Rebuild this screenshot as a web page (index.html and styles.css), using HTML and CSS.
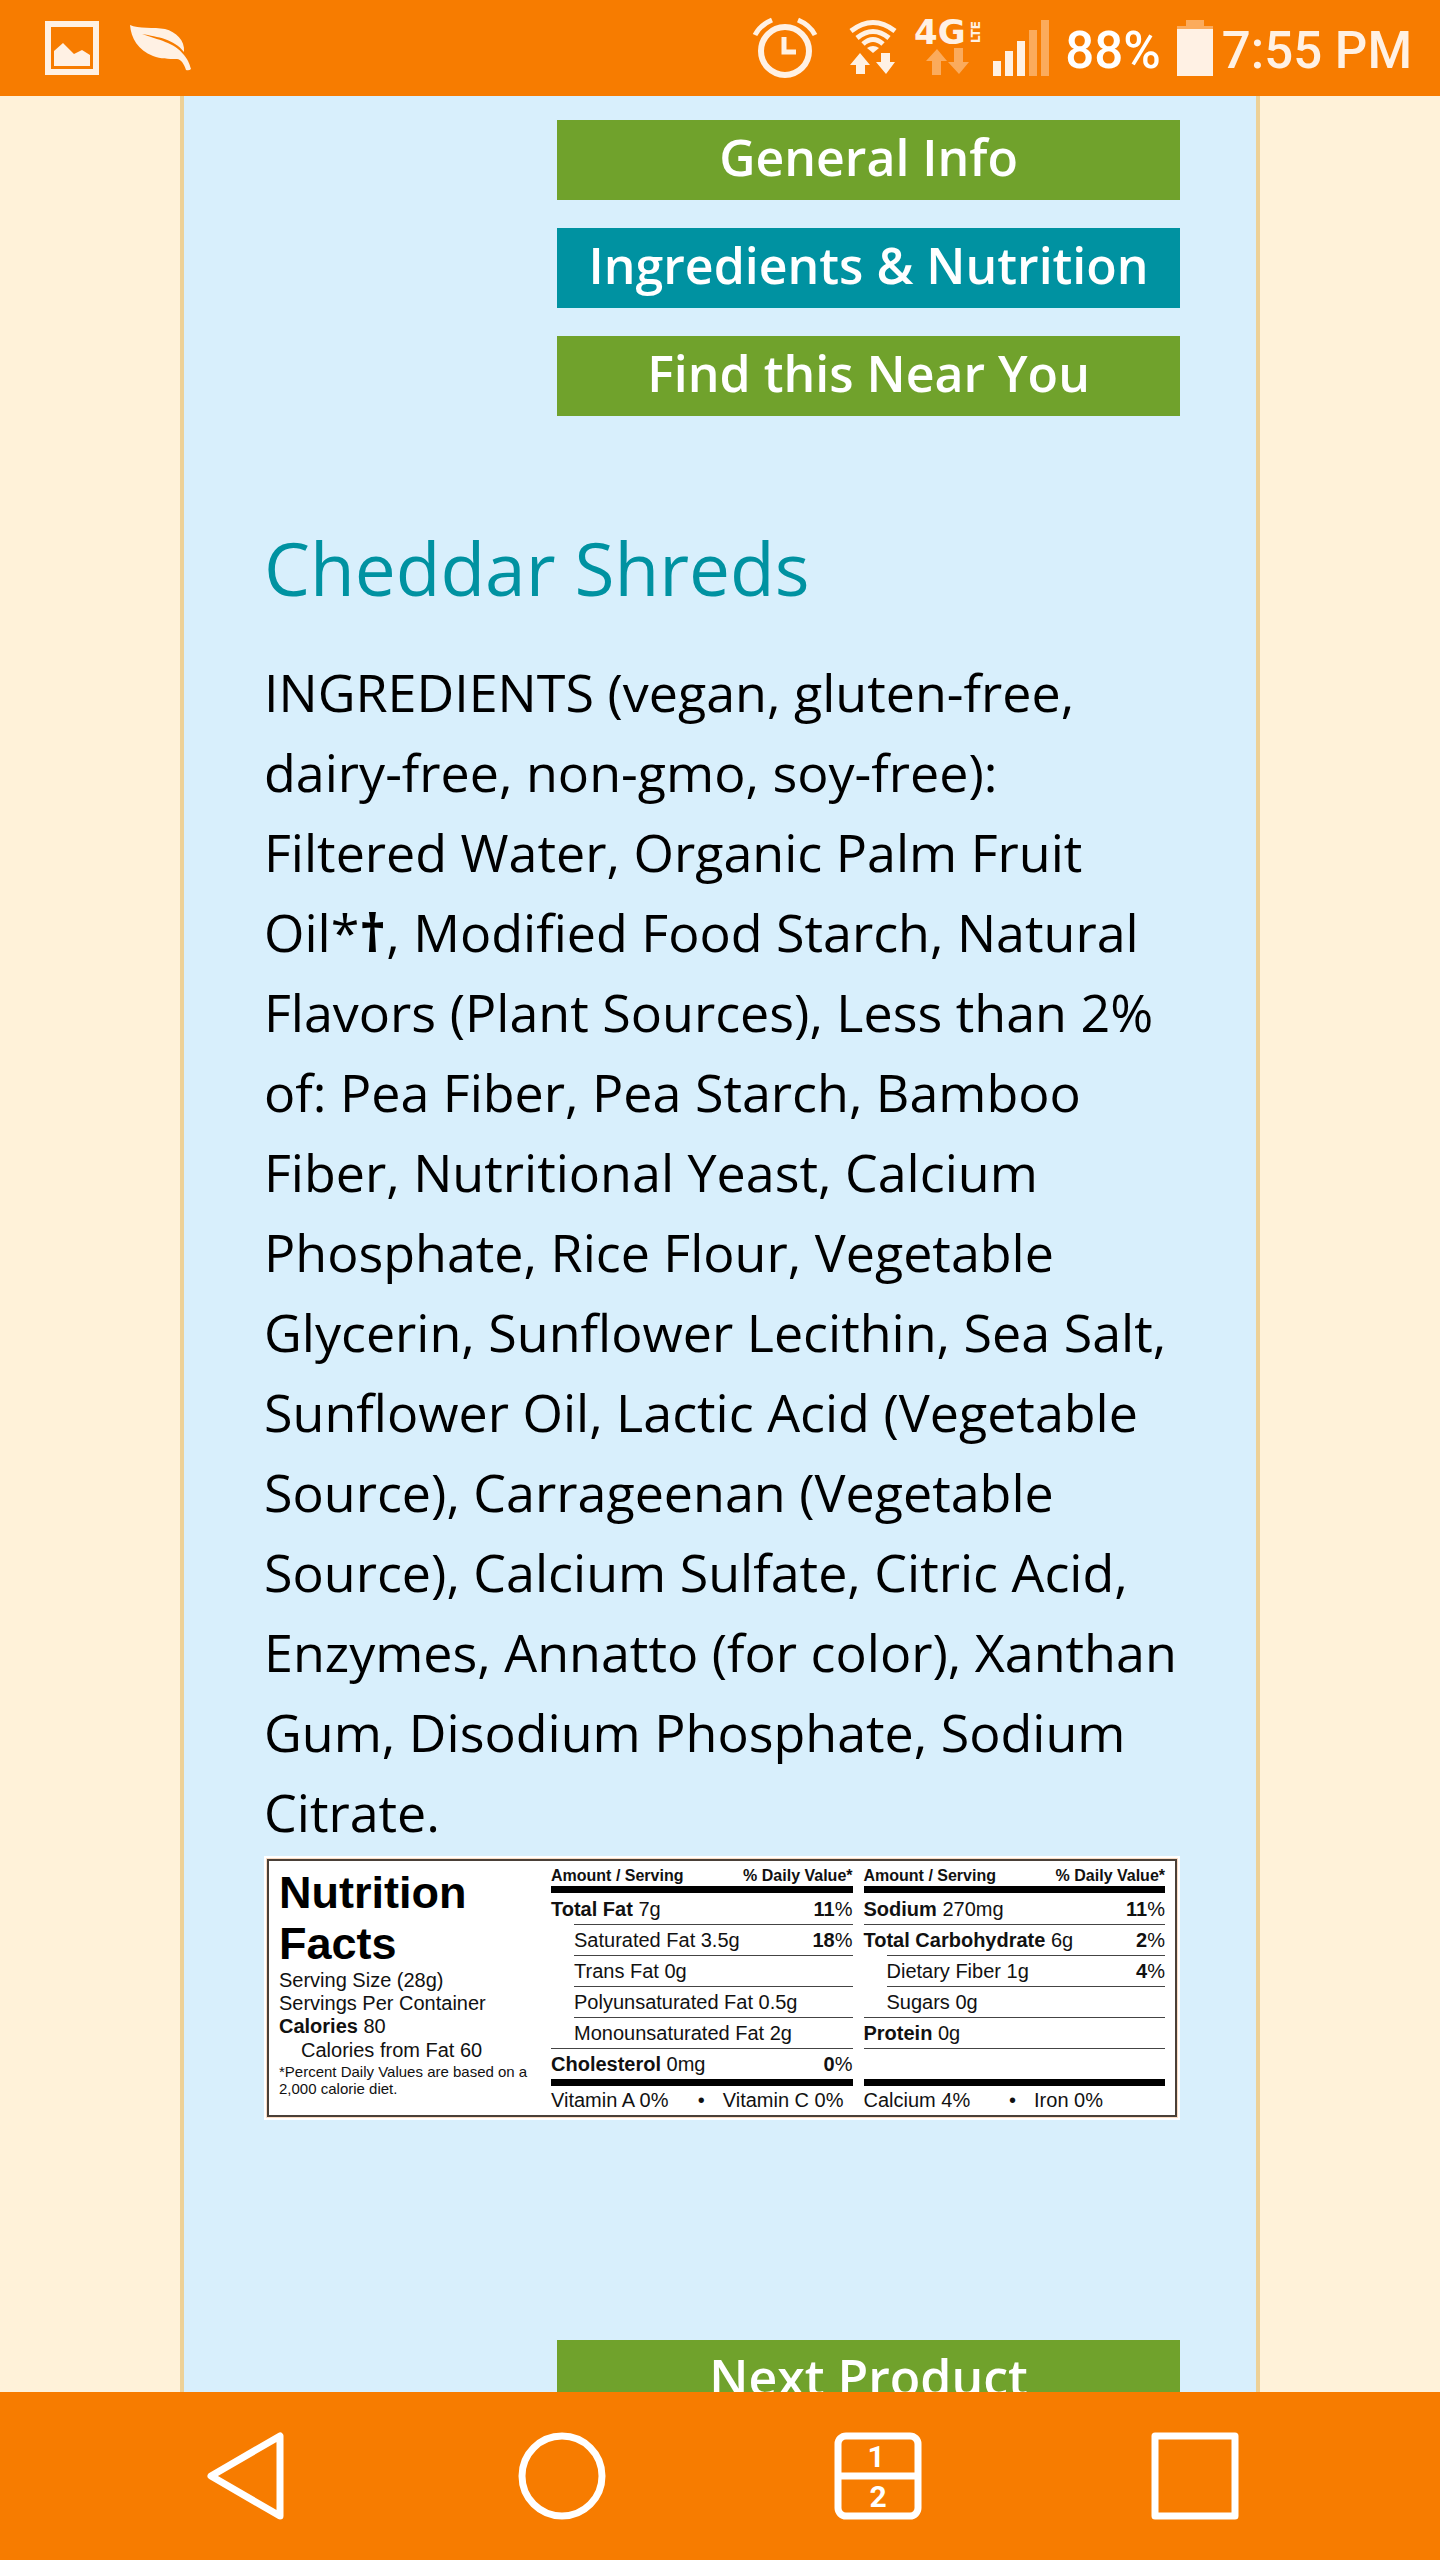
FILE: index.html
```
<!DOCTYPE html>
<html lang="en">
<head>
	<meta charset="UTF-8">
	<meta name="viewport" content="width=device-width, initial-scale=1">
	<title>Cheddar Shreds</title>
	<link rel="stylesheet" href="styles.css">
</head>
<body>
	<header class="status-bar">
		<div class="status-left">
			<svg width="54" height="54" viewBox="0 0 54 54">
				<path d="M3 3H51V51H3Z" fill="none" stroke="#fff1e4" stroke-width="6"/>
				<path d="M9 30L18 22L29 33L37 29L45 34V45H9Z" fill="#fff1e4"/>
			</svg>
			<svg width="62" height="46" viewBox="0 0 62 46">
				<path d="M0 0C8 4 24 2 35 4C46 7 55 15 54 27C44 14 28 12 12 9C28 15 44 17 54 30C59 36 60 41 61 44Q59 46 56 45C54 39 51 34 47 34C38 34 31 34 23 31C8 25 1 13 0 0Z" fill="#fff1e4"/>
			</svg>
		</div>
		<div class="status-right">
			<svg class="alarm" width="64" height="62" viewBox="0 0 64 62">
				<circle cx="32" cy="34" r="24" fill="none" stroke="#fff1e4" stroke-width="6"/>
				<path d="M31 20V35H43" fill="none" stroke="#fff1e4" stroke-width="5"/>
				<path d="M2 18Q7 8 19 3M62 18Q57 8 45 3" fill="none" stroke="#fff1e4" stroke-width="5"/>
			</svg>
			<svg class="wifi" width="48" height="56" viewBox="0 0 48 56">
				<g fill="none" stroke="#fff1e4" stroke-width="5">
					<path d="M2 11Q24 -6 46 11"/>
					<path d="M8 18Q24 5 40 18"/>
					<path d="M14 24Q24 15 34 24"/>
				</g>
				<path d="M18 28Q24 24 30 28L24 33Z" fill="#fff1e4"/>
				<path d="M11 33L21 45H16V54H7V45H1ZM32 33H41V42H46L37 54L27 42H32Z" fill="#fff1e4"/>
			</svg>
			<svg class="network" width="66" height="56" viewBox="0 0 66 56">
				<text class="net-name" x="-1" y="24">4G</text>
				<text class="net-type" transform="translate(65 23) rotate(-90)">LTE</text>
				<path d="M22 29L32 41H26V55H17V41H11ZM39 28H48V42H54L44 54L33 42H39Z" fill="#fbab5c"/>
			</svg>
			<svg class="signal" width="56" height="56" viewBox="0 0 56 56">
				<path d="M0 41H8V56H0ZM12 31H20V56H12ZM24 21H32V56H24Z" fill="#fff1e4"/>
				<path d="M36 10H44V56H36ZM48 0H56V56H48Z" fill="#fbab5c"/>
			</svg>
			<span class="percent">88%</span>
			<svg class="battery" width="36" height="56" viewBox="0 0 36 56">
				<path d="M9 0H27V6H36V9H0V6H9Z" fill="#fbab5c"/>
				<path d="M0 9H36V56H0Z" fill="#fff1e4"/>
			</svg>
			<time class="clock">7:55 PM</time>
		</div>
	</header>

	<main class="page">
		<div class="panel">
			<div class="buttons">
				<a href="#" class="button">General Info</a>
				<a href="#" class="button on">Ingredients &amp; Nutrition</a>
				<a href="#" class="button">Find this Near You</a>
			</div>

			<h1>Cheddar Shreds</h1>
			<p class="ingredients">
				INGREDIENTS (vegan, gluten-free,<br>
				dairy-free, non-gmo, soy-free):<br>
				Filtered Water, Organic Palm Fruit<br>
				Oil*<b>†</b>, Modified Food Starch, Natural<br>
				Flavors (Plant Sources), Less than 2%<br>
				of: Pea Fiber, Pea Starch, Bamboo<br>
				Fiber, Nutritional Yeast, Calcium<br>
				Phosphate, Rice Flour, Vegetable<br>
				Glycerin, Sunflower Lecithin, Sea Salt,<br>
				Sunflower Oil, Lactic Acid (Vegetable<br>
				Source), Carrageenan (Vegetable<br>
				Source), Calcium Sulfate, Citric Acid,<br>
				Enzymes, Annatto (for color), Xanthan<br>
				Gum, Disodium Phosphate, Sodium<br>
				Citrate.
			</p>

			<section class="nutrition">
				<div class="label">
					<div class="summary">
						<h2>Nutrition Facts</h2>
						<p>Serving Size (28g)</p>
						<p>Servings Per Container</p>
						<p><b>Calories</b> 80</p>
						<p class="from-fat">Calories from Fat 60</p>
						<p class="note">*Percent Daily Values are based on a 2,000 calorie diet.</p>
					</div>
					<table>
						<colgroup><col class="indent"><col><col class="percent-col"></colgroup>
						<thead>
							<tr><th colspan="2">Amount / Serving</th><th class="value">% Daily Value*</th></tr>
						</thead>
						<tbody>
							<tr><td colspan="2"><b>Total Fat</b> 7g</td><td class="value"><b>11</b>%</td></tr>
							<tr><td class="blank"></td><td>Saturated Fat 3.5g</td><td class="value"><b>18</b>%</td></tr>
							<tr><td class="blank"></td><td>Trans Fat 0g</td><td></td></tr>
							<tr><td class="blank"></td><td>Polyunsaturated Fat 0.5g</td><td></td></tr>
							<tr><td class="blank"></td><td>Monounsaturated Fat 2g</td><td></td></tr>
							<tr><td colspan="2"><b>Cholesterol</b> 0mg</td><td class="value"><b>0</b>%</td></tr>
						</tbody>
						<tfoot>
							<tr><td colspan="3"><div class="vitamins"><span>Vitamin A 0%</span><span>•</span><span>Vitamin C 0%</span></div></td></tr>
						</tfoot>
					</table>
					<table>
						<colgroup><col class="indent"><col><col class="percent-col"></colgroup>
						<thead>
							<tr><th colspan="2">Amount / Serving</th><th class="value">% Daily Value*</th></tr>
						</thead>
						<tbody>
							<tr><td colspan="2"><b>Sodium</b> 270mg</td><td class="value"><b>11</b>%</td></tr>
							<tr><td colspan="2"><b>Total Carbohydrate</b> 6g</td><td class="value"><b>2</b>%</td></tr>
							<tr><td class="blank"></td><td>Dietary Fiber 1g</td><td class="value"><b>4</b>%</td></tr>
							<tr><td class="blank"></td><td>Sugars 0g</td><td></td></tr>
							<tr><td colspan="2"><b>Protein</b> 0g</td><td></td></tr>
							<tr><td colspan="2"></td><td></td></tr>
						</tbody>
						<tfoot>
							<tr><td colspan="3"><div class="vitamins minerals"><span>Calcium 4%</span><span>•</span><span>Iron 0%</span></div></td></tr>
						</tfoot>
					</table>
				</div>
			</section>

			<div class="buttons">
				<a href="#" class="button">Next Product</a>
			</div>
		</div>
	</main>

	<nav class="nav-bar">
		<button type="button" aria-label="Back">
			<svg width="88" height="88" viewBox="0 0 88 88">
				<path d="M79 4V84L10 44Z" fill="none" stroke="#fff" stroke-width="7" stroke-linejoin="round"/>
			</svg>
		</button>
		<button type="button" aria-label="Home">
			<svg width="88" height="88" viewBox="0 0 88 88">
				<circle cx="44" cy="44" r="40" fill="none" stroke="#fff" stroke-width="7"/>
			</svg>
		</button>
		<button type="button" aria-label="Dual window">
			<svg width="88" height="88" viewBox="0 0 88 88">
				<rect x="4" y="4" width="80" height="80" rx="8" fill="none" stroke="#fff" stroke-width="7"/>
				<path d="M4 44H84" stroke="#fff" stroke-width="7"/>
				<text class="dual" x="42" y="35">1</text>
				<text class="dual" x="44" y="75">2</text>
			</svg>
		</button>
		<button type="button" aria-label="Recent apps">
			<svg width="88" height="88" viewBox="0 0 88 88">
				<rect x="4" y="4" width="80" height="80" fill="none" stroke="#fff" stroke-width="7" stroke-linejoin="round"/>
			</svg>
		</button>
	</nav>
</body>
</html>
```
FILE: styles.css
```
* {
	box-sizing: border-box;
}

body {
	margin: 0;
	height: 100vh;
	display: flex;
	flex-direction: column;
	background-color: #fff2d9;
	font-family: "Open Sans", Lato, sans-serif;
}

svg {
	display: block;
	flex: none;
	overflow: visible;
}

.status-bar {
	flex: none;
	height: 96px;
	padding: 0 28px 0 45px;
	display: flex;
	justify-content: space-between;
	align-items: center;
	background-color: #f77c00;
	color: #fff1e4;
	font-family: Roboto, sans-serif;
	font-size: 51px;
	font-weight: 500;
	white-space: nowrap;
}

.status-left {
	display: flex;
	align-items: center;
	gap: 31px;
}

.status-right {
	display: flex;
	align-items: center;
}

.alarm {
	margin-right: 32px;
}

.wifi {
	margin-right: 18px;
}

.network {
	margin-right: 12px;
}

.signal,
.percent {
	margin-right: 16px;
}

.percent,
.clock {
	padding-top: 4px;
}

.percent {
	color: white;
}

.battery {
	margin-right: 9px;
}

.net-name {
	font: bold 34px "DejaVu Sans", sans-serif;
	fill: #fff1e4;
}

.net-type {
	font: bold 12px "DejaVu Sans", sans-serif;
	fill: #fff1e4;
}

.page {
	flex: 1;
	min-height: 0;
	overflow: hidden;
}

.panel {
	width: 75%;
	min-height: 100%;
	margin: 0 auto;
	padding: 24px 76px 24px 80px;
	background-color: #d8effc;
	border: solid #edd197;
	border-width: 0 4px;
}

.buttons {
	display: flex;
	flex-direction: column;
	align-items: flex-end;
	gap: 28px;
}

.button {
	width: 68%;
	height: 80px;
	line-height: 74px;
	background-color: #70a22c;
	color: white;
	font-size: 50px;
	font-weight: 600;
	text-align: center;
	text-decoration: none;
	white-space: nowrap;
}

.on {
	background-color: #0092a1;
}

h1 {
	margin: 104px 0 36px;
	color: #0092a1;
	font-size: 73px;
	font-weight: normal;
	line-height: 96px;
}

.ingredients {
	margin: 0 0 4px;
	color: black;
	font-size: 52px;
	line-height: 80px;
	white-space: nowrap;
}

.nutrition {
	margin-bottom: 220px;
	padding: 3px;
	background-color: white;
	color: #111;
	font-family: "Liberation Sans", Arial, sans-serif;
	font-size: 20px;
}

.label {
	display: grid;
	grid-template-columns: 261px minmax(0, 1fr) minmax(0, 1fr);
	gap: 11px;
	height: 258px;
	padding: 4px 10px 0;
	border: 2px solid #4a4038;
	outline: 1px solid #fbdcc4;
}

.summary p {
	margin: 0;
	line-height: 23px;
}

.summary h2 {
	width: 200px;
	margin: 2px 0 0;
	color: black;
	font-size: 45px;
	line-height: 51px;
}

.summary .from-fat {
	padding-left: 22px;
	line-height: 25px;
}

.summary .note {
	margin-right: -8px;
	font-size: 15px;
	line-height: 17px;
}

table {
	width: 100%;
	table-layout: fixed;
	border-spacing: 0;
	align-self: start;
}

.indent {
	width: 23px;
}

.percent-col {
	width: 120px;
}

th {
	height: 28px;
	padding: 0;
	border-bottom: 7px solid black;
	font-size: 16px;
	line-height: 18px;
	text-align: left;
	white-space: nowrap;
}

td {
	height: 31px;
	padding: 0;
	border-top: 1px solid #444;
	line-height: 24px;
	white-space: nowrap;
}

tbody tr:first-child td,
td.blank {
	border-top: none;
}

.value {
	text-align: right;
}

tfoot td {
	border-top: 7px solid black;
	line-height: 28px;
}

.vitamins {
	display: flex;
	gap: 18px;
	padding-right: 9px;
}

.vitamins span:first-child {
	margin-right: auto;
}

.minerals {
	padding-right: 62px;
}

.nav-bar {
	flex: none;
	height: 168px;
	padding: 0 6%;
	display: grid;
	grid-template-columns: repeat(4, 1fr);
	align-items: center;
	background-color: #f77c00;
}

.nav-bar button {
	display: flex;
	justify-content: center;
	padding: 0;
	border: none;
	background: none;
	cursor: pointer;
}

.dual {
	font: bold 30px Roboto, sans-serif;
	fill: white;
	text-anchor: middle;
}
```
